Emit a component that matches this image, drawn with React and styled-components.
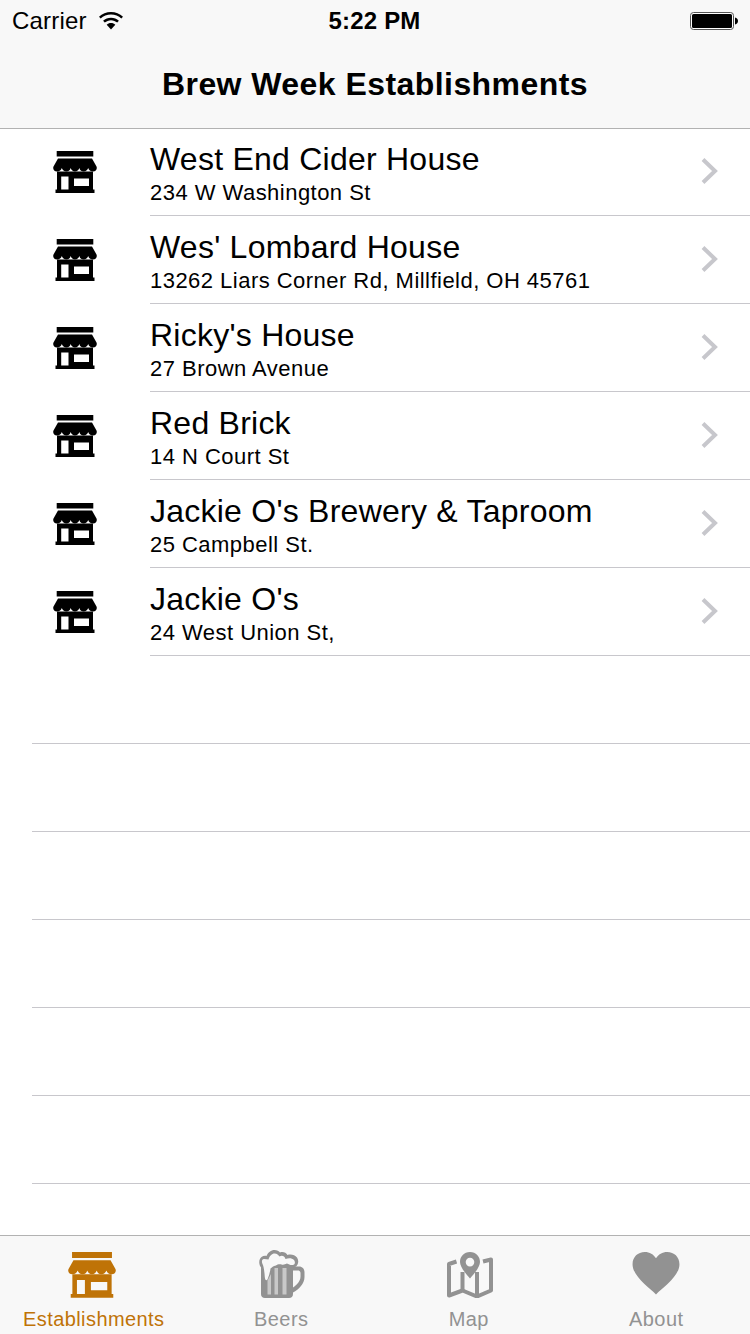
import React from "react"
import styled, { createGlobalStyle } from "styled-components"

const GlobalStyle = createGlobalStyle`
  html, body {
    margin: 0;
    padding: 0;
    background: #fff;
    font-family: "Liberation Sans", Arial, sans-serif;
    color: #000;
  }
`

const Screen = styled.div`
  width: 750px;
  height: 1334px;
  display: flex;
  flex-direction: column;
  overflow: hidden;
`

const Header = styled.header`
  height: 128px;
  background: #f8f8f8;
  border-bottom: 1px solid #b2b2b2;
  display: flex;
  flex-direction: column;
`

const StatusBar = styled.div`
  height: 40px;
  display: grid;
  grid-template-columns: 1fr auto 1fr;
  align-items: center;
  padding: 1px 12px 0;
  box-sizing: border-box;
`

const StatusLeft = styled.div`
  display: flex;
  align-items: center;
  gap: 12px;
  font-size: 24px;
  letter-spacing: 0.2px;
`

const Clock = styled.div`
  font-size: 24px;
  font-weight: 700;
  letter-spacing: 0.2px;
  margin-right: 1px;
`

const StatusRight = styled.div`
  display: flex;
  justify-content: flex-end;
`

const NavTitle = styled.h1`
  flex: 1;
  margin: 0;
  display: flex;
  align-items: center;
  justify-content: center;
  font-size: 32px;
  font-weight: 700;
  letter-spacing: 0.44px;
`

const List = styled.main`
  flex: 1;
  background: #fff;
`

const Row = styled.div`
  height: 88px;
  box-sizing: border-box;
  display: flex;
  margin-top: ${p => (p.$first ? "-1px" : "0")};
`

const IconCell = styled.div`
  width: 150px;
  flex: none;
  display: flex;
  padding: 23px 0 0 53px;
  box-sizing: border-box;
`

const Body = styled.div`
  flex: 1;
  display: flex;
  align-items: center;
  justify-content: space-between;
  border-bottom: 1px solid #c8c7cc;
  padding-right: 31px;
`

const Texts = styled.div`
  display: flex;
  flex-direction: column;
  gap: 2px;
  padding-top: 4px;
`

const Name = styled.div`
  font-size: 32px;
  line-height: 37px;
  letter-spacing: 0.24px;
`

const Address = styled.div`
  font-size: 22px;
  line-height: 26px;
  letter-spacing: 0.47px;
`

const ChevronBox = styled.div`
  display: flex;
  margin-bottom: 1px;
`

const EmptyRow = styled.div`
  height: 88px;
  box-sizing: border-box;
  margin-left: 32px;
  border-bottom: 1px solid #c8c7cc;
`

const TabBar = styled.nav`
  height: 98px;
  flex: none;
  background: #f8f8f8;
  border-top: 1px solid #b2b2b2;
  display: grid;
  grid-template-columns: repeat(4, 1fr);
`

const Tab = styled.div`
  display: flex;
  flex-direction: column;
  align-items: center;
  color: ${p => (p.$active ? "#bf7307" : "#929292")};
`

const TabIcon = styled.div`
  height: 71px;
  padding-top: ${p => p.$top}px;
  margin-right: ${p => p.$shift}px;
  box-sizing: border-box;
  display: flex;
  align-items: flex-start;
`

const TabLabel = styled.div`
  font-size: 20px;
  line-height: 24px;
  letter-spacing: 0.42px;
`

const Store = ({ size = 44 }) => (
  <svg width={size} height={(size * 42) / 44} viewBox="0 0 44 42" fill="currentColor">
    <path d="M3.700 0H40.300V5.500H3.700z" />
    <path d="M5 7.500H39L43.500 15.500C44.500 18 43 20.500 40 20.500 37.500 20.500 35.800 19 35.200 17 34.400 19.200 32.800 20.500 30.700 20.500 28.200 20.500 26.800 19 26.400 17 25.600 19.200 24 20.500 22 20.500 20 20.500 18.400 19.200 17.600 17 17.200 19 15.800 20.500 13.300 20.500 11.200 20.500 9.600 19.200 8.800 17 8.200 19 6.500 20.500 4 20.500 1 20.500-.5 18 .5 15.500z" />
    <path
      fillRule="evenodd"
      d="M4 20.500H40V38.500H41.500V42H2.500V38.500H4z M8.200 25.600V38.500H15.500V25.600z M21 27.500V35H36V27.500z"
    />
  </svg>
)

const Beer = () => (
  <svg width="46" height="48" viewBox="0 0 46 48" fill="currentColor">
    <path d="M2 14H34V44C34 46.500 32.500 48 30 48H6C3.500 48 2 46.500 2 44z" />
    <path
      fillRule="evenodd"
      d="M34 16.500H40C43.500 16.500 45.500 19 45.500 22.500V27C45.500 33.500 40 39.500 34 42.500z M34 20.500V37.500C38 35 41.500 31 41.500 26.500V23C41.500 21.500 40.500 20.500 39 20.500z"
    />
    <path d="M2.500 18C-.5 15-.5 9 2.500 7 4 5.800 6 5.500 7.500 6 9 2.500 12 0 15.500 0 18 0 20 1 21 2.500 24 1.500 27 2.500 28.500 5 32 4 36 5 38 7.500 40 10.500 39.500 14 37 16.500L34 18z" />
    <path
      fill="#f8f8f8"
      d="M3.500 14C2.300 11.500 3 9 5 9 6.500 9 8 9.500 9.500 9.500 10.500 6 13 3.500 15.500 3.500 18 3.500 19.500 5 20.500 6.500 23 5 25.500 6 26.500 9 30 7.500 33 8 35 10 36.500 12 36 14 34.500 14.800 32 15.500 30 14.500 28 13.500 26 14.500 24.500 15 22.500 14.500 20.500 14 18 14.500 17 15.500 14 16 13 17.500 11.500 18.500 11 22.500 10 26 8.500 29.500 7 31 6 30 5.800 27 5.500 23 5 17 3.500 14z"
    />
    <path fill="#c8c8c8" d="M8.500 30.500L12 24V44.500H8.500zM15.500 18H19V44.500H15.500zM23.500 18H27.500V44.500H23.500z" />
  </svg>
)

const MapPin = () => (
  <svg width="46" height="46" viewBox="0 0 46 46" fill="none">
    <g stroke="currentColor" strokeWidth="4" strokeLinejoin="round">
      <path d="M9.500 9.500L2 12V43.500L15.500 38.500L30 44.500L44 38.500V7.500L36 9.500" />
      <path d="M15.500 20V38.500M30 20V44.500" />
    </g>
    <path
      fill="currentColor"
      fillRule="evenodd"
      d="M23 0C29 0 33 4.500 33 10 33 15 27 22 23 26.500 19 22 13 15 13 10 13 4.500 17 0 23 0z M23 5.800A4.300 4.300 0 1 0 23 14.400 4.300 4.300 0 0 0 23 5.800z"
    />
  </svg>
)

const Heart = () => (
  <svg width="48" height="43" viewBox="0 0 48 44" fill="currentColor">
    <path d="M24 43.500C17 36 0 25 0 12.500 0 5 5.500 0 12.500 0 17.500 0 21.500 2.500 24 6.500 26.500 2.500 30.500 0 35.500 0 42.500 0 48 5 48 12.500 48 25 31 36 24 43.500z" />
  </svg>
)

const Wifi = () => (
  <svg width="24" height="18" viewBox="0 0 24 18" fill="#000">
    <path d="M12 0C16.600 0 20.800 1.800 24 4.700L22.300 6.500C19.600 4 16 2.500 12 2.500S4.400 4 1.700 6.500L0 4.700C3.200 1.800 7.400 0 12 0z" />
    <path d="M12 5.700C15 5.700 17.800 6.900 19.900 8.800L18.200 10.600C16.500 9.100 14.400 8.200 12 8.200S7.500 9.100 5.800 10.600L4.100 8.800C6.200 6.900 9 5.700 12 5.700z" />
    <path d="M12 11C13.700 11 15.200 11.600 16.300 12.700L12 17.500 7.700 12.700C8.800 11.600 10.300 11 12 11z" />
  </svg>
)

const Battery = () => (
  <svg width="48" height="18" viewBox="0 0 48 18">
    <rect x="0.500" y="0.500" width="43" height="17" rx="3" fill="#fff" stroke="#555" />
    <rect x="2" y="2" width="40" height="14" rx="1.500" fill="#000" />
    <path d="M45 5.500C46.800 5.800 48 7.200 48 9S46.800 12.200 45 12.500z" fill="#000" />
  </svg>
)

const Chevron = () => (
  <svg width="18" height="26" viewBox="0 0 18 26" fill="none">
    <path d="M2 1.500L14 13 2 24.500" stroke="#c7c7cc" strokeWidth="4" />
  </svg>
)

const places = [
  { name: "West End Cider House", address: "234 W Washington St" },
  { name: "Wes' Lombard House", address: "13262 Liars Corner Rd, Millfield, OH 45761" },
  { name: "Ricky's House", address: "27 Brown Avenue" },
  { name: "Red Brick", address: "14 N Court St" },
  { name: "Jackie O's Brewery & Taproom", address: "25 Campbell St." },
  { name: "Jackie O's", address: "24 West Union St," },
]

const tabs = [
  { label: "Establishments", icon: <Store size={48} />, active: true, top: 16, shift: 3 },
  { label: "Beers", icon: <Beer />, top: 14, shift: -2 },
  { label: "Map", icon: <MapPin />, top: 16, shift: -2 },
  { label: "About", icon: <Heart />, top: 16, shift: 0 },
]

const App = () => (
  <Screen>
    <GlobalStyle />
    <Header>
      <StatusBar>
        <StatusLeft>
          Carrier
          <Wifi />
        </StatusLeft>
        <Clock>5:22 PM</Clock>
        <StatusRight>
          <Battery />
        </StatusRight>
      </StatusBar>
      <NavTitle>Brew Week Establishments</NavTitle>
    </Header>
    <List>
      {places.map((p, i) => (
        <Row key={p.name} $first={i === 0}>
          <IconCell>
            <Store />
          </IconCell>
          <Body>
            <Texts>
              <Name>{p.name}</Name>
              <Address>{p.address}</Address>
            </Texts>
            <ChevronBox>
              <Chevron />
            </ChevronBox>
          </Body>
        </Row>
      ))}
      {[0, 1, 2, 3, 4, 5].map(i => (
        <EmptyRow key={i} />
      ))}
    </List>
    <TabBar>
      {tabs.map(t => (
        <Tab key={t.label} $active={t.active}>
          <TabIcon $top={t.top} $shift={t.shift}>
            {t.icon}
          </TabIcon>
          <TabLabel>{t.label}</TabLabel>
        </Tab>
      ))}
    </TabBar>
  </Screen>
)

export default App
